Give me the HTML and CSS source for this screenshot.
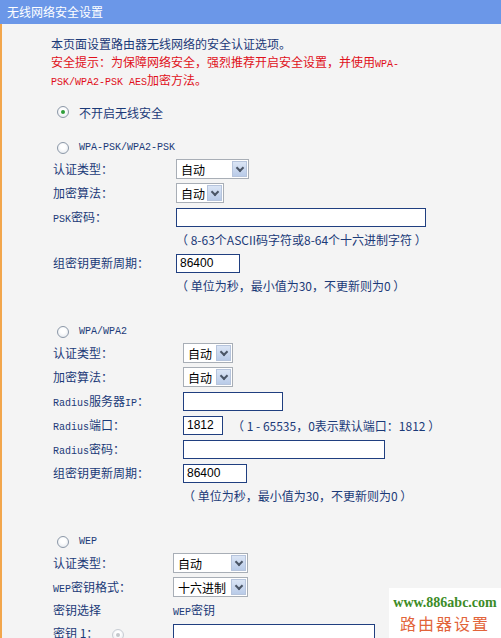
FILE: index.html
```html
<!DOCTYPE html>
<html>
<head>
  <meta charset="utf-8">
  <link rel="stylesheet" href="styles.css">
</head>
<body>
<div class="title">无线网络安全设置</div>
<div class="content">
  <p class="intro">本页面设置路由器无线网络的安全认证选项。</p>
  <p class="warn">安全提示：为保障网络安全，强烈推荐开启安全设置，并使用<span class="mono">WPA-</span><br><span class="mono">PSK/WPA2-PSK AES</span>加密方法。</p>

  <div class="opt first"><span class="radio on"></span>不开启无线安全</div>

  <div class="opt second"><span class="radio"></span><span class="mono">WPA-PSK/WPA2-PSK</span></div>
  <div class="form psk">
    <div class="label">认证类型：</div>
    <div class="field"><div class="select w73"><span>自动</span><i></i></div></div>
    <div class="label">加密算法：</div>
    <div class="field"><div class="select w48"><span>自动</span><i></i></div></div>
    <div class="label"><span class="mono">PSK</span>密码：</div>
    <div class="field"><div class="input w250"></div></div>
    <div class="label hint"></div>
    <div class="field hint">（ 8-63个ASCII码字符或8-64个十六进制字符 ）</div>
    <div class="label">组密钥更新周期：</div>
    <div class="field"><div class="input w64">86400</div></div>
    <div class="label hint"></div>
    <div class="field hint">（ 单位为秒，最小值为30，不更新则为0 ）</div>
  </div>

  <div class="opt section"><span class="radio"></span><span class="mono">WPA/WPA2</span></div>
  <div class="form wpa">
    <div class="label">认证类型：</div>
    <div class="field"><div class="select w50"><span>自动</span><i></i></div></div>
    <div class="label">加密算法：</div>
    <div class="field"><div class="select w50"><span>自动</span><i></i></div></div>
    <div class="label"><span class="mono">Radius</span>服务器<span class="mono">IP</span>：</div>
    <div class="field"><div class="input w100"></div></div>
    <div class="label"><span class="mono">Radius</span>端口：</div>
    <div class="field"><div class="input w40">1812</div><span class="note">（ 1 - 65535，0表示默认端口：1812 ）</span></div>
    <div class="label"><span class="mono">Radius</span>密码：</div>
    <div class="field"><div class="input w202"></div></div>
    <div class="label">组密钥更新周期：</div>
    <div class="field"><div class="input w64">86400</div></div>
    <div class="label hint"></div>
    <div class="field hint">（ 单位为秒，最小值为30，不更新则为0 ）</div>
  </div>

  <div class="opt section wep"><span class="radio"></span><span class="mono">WEP</span></div>
  <div class="form wepform">
    <div class="label">认证类型：</div>
    <div class="field"><div class="select w75"><span>自动</span><i></i></div></div>
    <div class="label"><span class="mono">WEP</span>密钥格式：</div>
    <div class="field"><div class="select w75"><span>十六进制</span><i></i></div></div>
    <div class="label short">密钥选择</div>
    <div class="field short"><span class="mono">WEP</span>密钥</div>
    <div class="label">密钥 1：<span class="radio dim"></span></div>
    <div class="field"><div class="input w202"></div></div>
  </div>
</div>

<div class="stamp">
  <div class="site">www.886abc.com</div>
  <div class="brand">路由器设置</div>
</div>
</body>
</html>
```

FILE: styles.css
```css
html, body {
  margin: 0;
  padding: 0;
  background: #f4f4f4;
  overflow: hidden;
}
body {
  font-family: "Noto Sans CJK SC", sans-serif;
  font-size: 12px;
  color: #1b3a78;
  height: 638px;
  position: relative;
}
.mono {
  font-family: "Liberation Mono", monospace;
  font-size: 10px;
  line-height: 10px;
}

.title {
  height: 24px;
  line-height: 24px;
  background: #6b97e8;
  color: #fff;
  padding-left: 7px;
  font-size: 12px;
}
.content {
  border-left: 2px solid #f2a64c;
  padding: 11px 0 0 49px;
  height: 620px;
}
.content p {
  margin: 0;
  height: 18px;
  line-height: 18px;
}
.content p.warn {
  height: 36px;
}
.warn {
  color: #e0101a;
}

.opt {
  height: 20px;
  display: flex;
  align-items: center;
  padding-left: 6px;
}
.opt.first { margin-top: 13px; }
.opt.second { margin-top: 16px; }
.opt.section { margin-top: 25px; }
.opt.wep { margin-top: 25px; }

.radio {
  display: inline-block;
  width: 10px;
  height: 10px;
  border: 1px solid #8c98a8;
  border-radius: 50%;
  background: radial-gradient(circle at 50% 40%, #ffffff 30%, #dfe4ea 100%);
  margin-right: 10px;
  position: relative;
  flex: none;
}
.radio.on::after {
  content: "";
  position: absolute;
  left: 3px;
  top: 3px;
  width: 4px;
  height: 4px;
  border-radius: 50%;
  background: #2f9e3a;
}
.radio.dim {
  border-color: #c8cdd4;
  margin-left: 14px;
  margin-right: 0;
  vertical-align: middle;
}
.radio.dim::after {
  content: "";
  position: absolute;
  left: 3px;
  top: 3px;
  width: 4px;
  height: 4px;
  border-radius: 50%;
  background: #c4c8cc;
}

.form {
  display: grid;
  padding-left: 2px;
  margin-top: -1px;
}
.form.psk { grid-template-columns: 123px 1fr; }
.form.wpa { grid-template-columns: 130px 1fr; }
.form.wepform { grid-template-columns: 120px 1fr; }

.label {
  height: 24px;
  line-height: 24px;
  white-space: nowrap;
}
.field {
  display: flex;
  align-items: center;
  height: 24px;
  white-space: nowrap;
}
.label.hint, .field.hint,
.label.short, .field.short {
  height: 22px;
  line-height: 22px;
}
.field.short {
  display: block;
}

.select {
  box-sizing: border-box;
  height: 20px;
  border: 1px solid #a8aeb6;
  background: #fff;
  display: flex;
  align-items: center;
  justify-content: space-between;
  color: #000;
  padding-left: 4px;
}
.select i {
  width: 15px;
  height: 16px;
  margin-right: 1px;
  box-sizing: border-box;
  border: 1px solid #b6c4dc;
  background: linear-gradient(#dbe5f5, #b9cbe8);
  position: relative;
}
.select i::after {
  content: "";
  position: absolute;
  left: 4px;
  top: 3px;
  width: 4px;
  height: 4px;
  border-right: 2px solid #4a5566;
  border-bottom: 2px solid #4a5566;
  transform: rotate(45deg);
}
.w48 { width: 48px; }
.w50 { width: 50px; }
.w73 { width: 73px; }
.w75 { width: 75px; }

.input {
  box-sizing: border-box;
  height: 19px;
  border: 1px solid #203f80;
  background: #fff;
  color: #000;
  font-family: "Liberation Sans", sans-serif;
  font-size: 12px;
  line-height: 17px;
  padding-left: 3px;
}
.w40 { width: 40px; }
.w64 { width: 64px; }
.w100 { width: 100px; }
.w202 { width: 202px; }
.w250 { width: 250px; }

.note {
  margin-left: 9px;
}

.stamp {
  position: absolute;
  left: 389px;
  top: 588px;
  width: 112px;
  height: 50px;
  background: #fff;
  text-align: center;
}
.site {
  margin-top: 7px;
  font-family: "Liberation Serif", serif;
  font-weight: bold;
  font-size: 14px;
  color: #3d8c27;
  line-height: 16px;
}
.brand {
  margin-top: 2px;
  font-size: 16px;
  letter-spacing: 2px;
  color: #e2643a;
  line-height: 20px;
}
```
